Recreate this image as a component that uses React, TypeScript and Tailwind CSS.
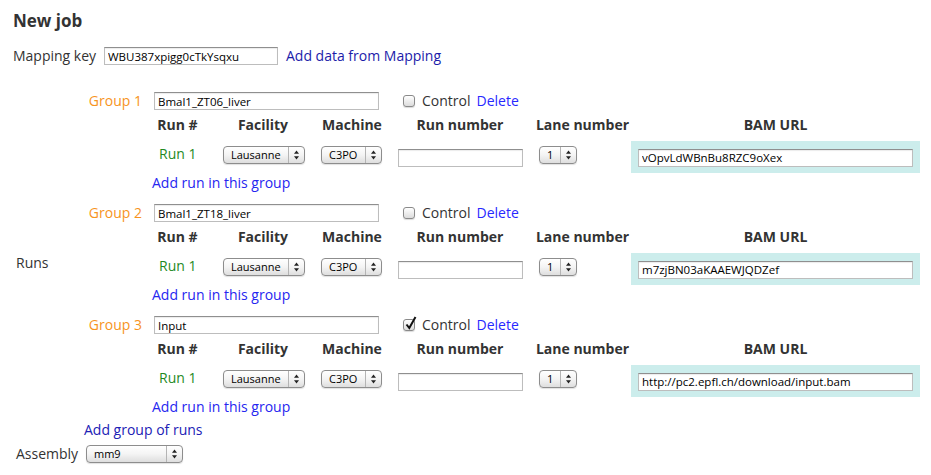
import React from "react";

type Run = { facility: string; machine: string; lane: string; bam: string };
type Group = { name: string; control: boolean; runs: Run[] };

const GROUPS: Group[] = [
  {
    name: "Bmal1_ZT06_liver",
    control: false,
    runs: [{ facility: "Lausanne", machine: "C3PO", lane: "1", bam: "vOpvLdWBnBu8RZC9oXex" }],
  },
  {
    name: "Bmal1_ZT18_liver",
    control: false,
    runs: [{ facility: "Lausanne", machine: "C3PO", lane: "1", bam: "m7zjBN03aKAAEWJQDZef" }],
  },
  {
    name: "Input",
    control: true,
    runs: [{ facility: "Lausanne", machine: "C3PO", lane: "1", bam: "http://pc2.epfl.ch/download/input.bam" }],
  },
];

function Arrows() {
  return (
    <svg width="7" height="10" viewBox="0 0 7 10">
      <path d="M3.5 0.5 L6 3.8 L1 3.8 Z" fill="#222" />
      <path d="M3.5 9.5 L6 6.2 L1 6.2 Z" fill="#222" />
    </svg>
  );
}

function FakeSelect({ value, className }: { value: string; className: string }) {
  return (
    <div
      className={
        "flex h-[18px] items-stretch rounded-[4px] border border-[#8d8d8d] bg-gradient-to-b from-white via-[#f4f4f4] to-[#dedede] shadow-[0_1px_1px_rgba(0,0,0,0.12)] " +
        className
      }
    >
      <span className="flex-1 truncate pl-[7px] text-[11px] leading-[16px] text-black">{value}</span>
      <span className="flex w-[16px] shrink-0 items-center justify-center border-l border-[#b4b4b4]">
        <Arrows />
      </span>
    </div>
  );
}

function TextBox({ value, className }: { value: string; className: string }) {
  return (
    <input
      readOnly
      value={value}
      spellCheck={false}
      className={
        "h-[18px] border border-[#bdbdbd] border-t-[#8f8f8f] bg-white px-[3px] text-[11.5px] text-black shadow-[inset_0_1px_1px_rgba(0,0,0,0.08)] outline-none " +
        className
      }
    />
  );
}

function Checkbox({ checked }: { checked: boolean }) {
  return (
    <span className="relative inline-block h-[12px] w-[12px] shrink-0 rounded-[3px] border border-[#8a8a8a] bg-gradient-to-b from-white to-[#dcdcdc] shadow-[0_1px_1px_rgba(0,0,0,0.15)]">
      {checked && (
        <svg className="absolute left-[1px] top-[-4px]" width="12" height="14" viewBox="0 0 12 14">
          <path d="M1.5 8.5 L4.3 12 L10.5 1" stroke="#111" strokeWidth="2" fill="none" />
        </svg>
      )}
    </span>
  );
}

function GroupBlock({ group, index }: { group: Group; index: number }) {
  return (
    <div className={index === 0 ? "flex flex-col" : "mt-[10px] flex flex-col"}>
      <div className="flex h-[20px] items-center">
        <span className="w-[58px] text-right leading-5 text-[#f7941d]">Group {index + 1}</span>
        <TextBox value={group.name} className="ml-[12px] w-[225px]" />
        <span className="ml-[24px]">
          <Checkbox checked={group.control} />
        </span>
        <span className="ml-[7px] leading-5 text-[#333]">Control</span>
        <span className="ml-[6px] leading-5 text-[#2828ff]">Delete</span>
      </div>

      <div className="ml-[68px] mt-[4px] grid grid-cols-[56px_110px_68px_148px_97px_289px] font-bold text-[#333]">
        <div className="pr-[5px] text-center leading-5">Run #</div>
        <div className="text-center leading-5">Facility</div>
        <div className="text-center leading-5">Machine</div>
        <div className="text-center leading-5">Run number</div>
        <div className="text-center leading-5">Lane number</div>
        <div className="text-center leading-5">BAM URL</div>
      </div>

      {group.runs.map((run, i) => (
        <div key={i} className="ml-[68px] mt-[6px] grid h-[32px] grid-cols-[56px_110px_68px_148px_97px_289px]">
          <div className="pl-[7px] pt-[3px] leading-5 text-[#1f8a1f]">Run {i + 1}</div>
          <div className="pl-[15px] pt-[5px]">
            <FakeSelect value={run.facility} className="w-[82px]" />
          </div>
          <div className="pl-[3px] pt-[5px]">
            <FakeSelect value={run.machine} className="w-[61px]" />
          </div>
          <div className="pl-[12px] pt-[5px]">
            <TextBox value="" className="w-[125px]" />
          </div>
          <div className="pl-[5px] pt-[5px]">
            <FakeSelect value={run.lane} className="w-[38px]" />
          </div>
          <div className="bg-[#ccedec] pl-[7px] pt-[5px]">
            <TextBox value={run.bam} className="w-[275px]" />
          </div>
        </div>
      ))}

      <div className="ml-[68px] leading-5 text-[#2626f0]">Add run in this group</div>
    </div>
  );
}

export default function App() {
  return (
    <div className="h-[475px] w-[931px] overflow-hidden bg-white pl-[13px] font-['Open_Sans',sans-serif] text-[14px] text-[#333]">
      <h1 className="pt-[9px] text-[17px] font-bold leading-[24px] text-[#333]">New job</h1>

      <div className="mt-[13px] flex h-[20px] items-center">
        <span className="w-[91px] leading-5">Mapping key</span>
        <TextBox value="WBU387xpigg0cTkYsqxu" className="w-[174px]" />
        <span className="ml-[8px] leading-5 text-[#1c1caa]">Add data from Mapping</span>
      </div>

      <div className="mt-[25px] flex">
        <div className="flex w-[71px] shrink-0 items-center pb-[6px] pl-[3px]">
          <span className="leading-5">Runs</span>
        </div>
        <div className="flex flex-col">
          {GROUPS.map((g, i) => (
            <GroupBlock key={i} group={g} index={i} />
          ))}
          <div className="mt-[3px] leading-5 text-[#2121b5]">Add group of runs</div>
        </div>
      </div>

      <div className="mt-[4px] flex h-[20px] items-center">
        <span className="w-[73px] pl-[3px] leading-5">Assembly</span>
        <FakeSelect value="mm9" className="w-[97px]" />
      </div>
    </div>
  );
}
